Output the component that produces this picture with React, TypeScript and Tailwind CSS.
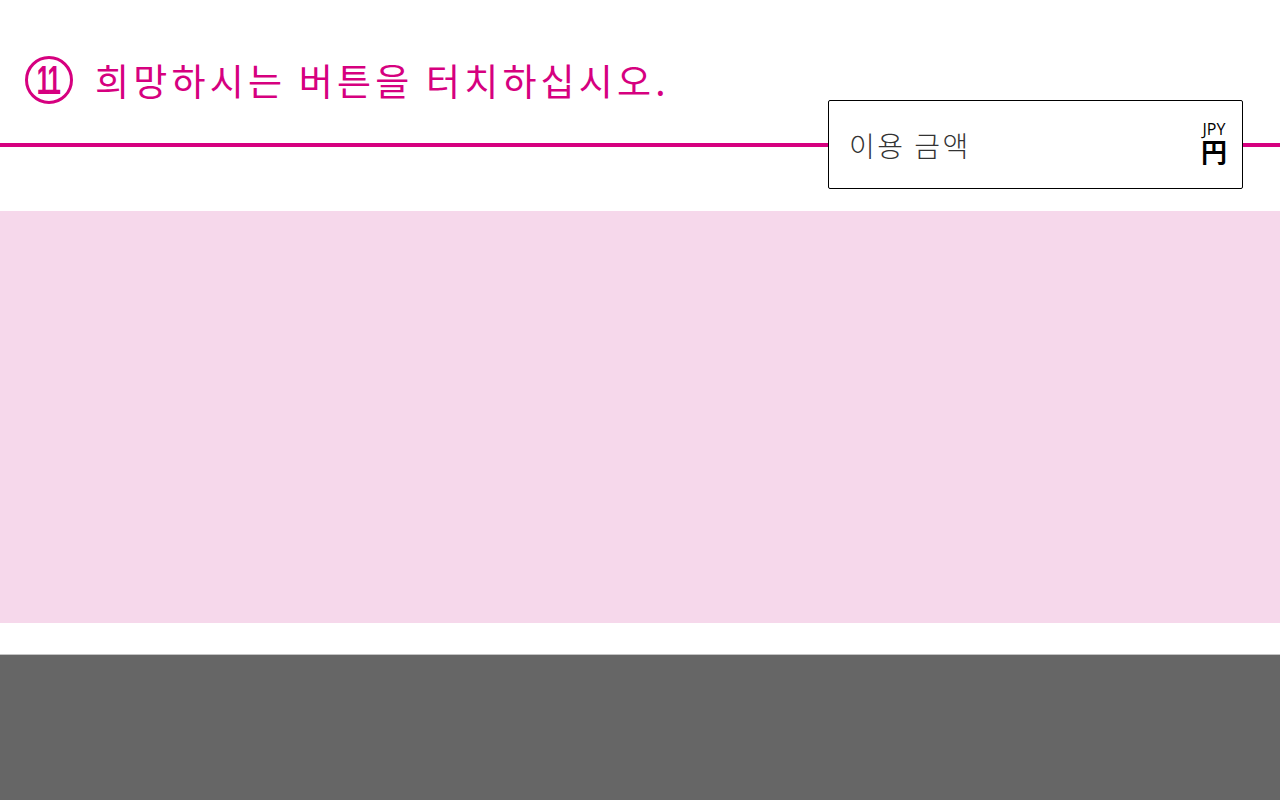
const magenta = "bg-[#d6007f]";

function Heading() {
	return (
		<div className="h-[100px] pl-[25px] pt-[57px] flex items-start gap-[22px] text-[#d6007f]">
			<div className="w-[48px] h-[48px] -mt-[1px] shrink-0 rounded-full border-[3px] border-[#d6007f] flex items-center justify-center overflow-hidden">
				<span className="font-['Liberation_Sans',sans-serif] font-bold text-[40px] leading-none tracking-[-2px] -ml-[2px] scale-x-[0.6]">
					11
				</span>
			</div>
			<h1 className="font-['Noto_Sans_CJK_KR',sans-serif] text-[37px] leading-[48px] -mt-[1px] whitespace-nowrap tracking-[4.2px]">
				희망하시는 버튼을 터치하십시오.
			</h1>
		</div>
	);
}

function AmountBox() {
	return (
		<div className="w-[415px] h-[89px] shrink-0 border border-black rounded-[2px] bg-white flex items-center justify-between pl-[20px] pr-[15px]">
			<span className="font-['Noto_Sans_CJK_KR',sans-serif] font-light text-[28px] text-[#333] leading-none mt-[1px] tracking-[2.5px]">
				이용 금액
			</span>
			<div className="flex flex-col items-center -mt-[5px]">
				<span className="font-['Open_Sans',sans-serif] text-[16px] text-black leading-[17px]">JPY</span>
				<span className="font-['Noto_Sans_CJK_JP',sans-serif] font-bold text-[26px] text-black leading-[26px]">円</span>
			</div>
		</div>
	);
}

export default function App() {
	return (
		<div className="w-[1280px] h-[800px] bg-white flex flex-col overflow-hidden">
			<div className="h-[211px] flex flex-col">
				<Heading />
				<div className="h-[89px] flex items-center">
					<div className={`flex-1 h-[4px] ${magenta}`}></div>
					<AmountBox />
					<div className={`w-[37px] h-[4px] ${magenta}`}></div>
				</div>
			</div>
			<div className="h-[412px] bg-[#f6d8eb]"></div>
			<div className="h-[31px] bg-white"></div>
			<div className="flex-1 bg-[#666666] border-t border-[#c4c4c4]"></div>
		</div>
	);
}
